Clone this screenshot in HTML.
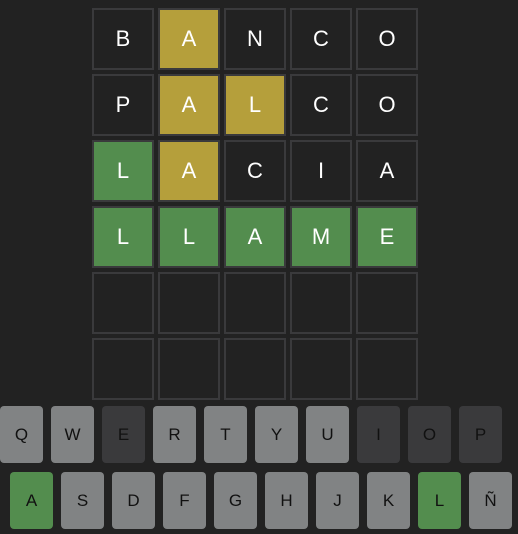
<!DOCTYPE html><html><head><style>
body{margin:0;width:518px;height:534px;background:#222222;font-family:"Liberation Sans",sans-serif;position:relative;overflow:hidden}
.t{position:absolute;width:58px;height:58px;border:2px solid #3a3a3c;color:#fff;font-size:22px;display:flex;align-items:center;justify-content:center}
.y{background:#b59f3b}.g{background:#538d4e}
.k{position:absolute;width:43px;height:57px;border-radius:4px;background:#818384;color:#111;font-size:17px;display:flex;align-items:center;justify-content:center}
.d{background:#3a3a3c}.kg{background:#538d4e}
</style></head><body>
<div id="b"></div>
<script>
var rows=[["B","A","N","C","O"],["P","A","L","C","O"],["L","A","C","I","A"],["L","L","A","M","E"],["","","","",""],["","","","",""]];
var cls=[["","y","","",""],["","y","y","",""],["g","y","","",""],["g","g","g","g","g"],["","","","",""],["","","","",""]];
var h="";
for(var r=0;r<6;r++)for(var c=0;c<5;c++)h+='<div class="t '+cls[r][c]+'" style="left:'+(92+c*66)+'px;top:'+(8+r*66)+'px">'+rows[r][c]+'</div>';
var k1="QWERTYUIOP",d1="EIOP";
for(var i=0;i<10;i++)h+='<div class="k '+(d1.indexOf(k1[i])>=0?"d":"")+'" style="left:'+(i*51)+'px;top:406px">'+k1[i]+'</div>';
var k2="ASDFGHJKLÑ";
for(var i=0;i<10;i++)h+='<div class="k '+("AL".indexOf(k2[i])>=0?"kg":"")+'" style="left:'+(10+i*51)+'px;top:472px">'+k2[i]+'</div>';
document.getElementById("b").innerHTML=h;
</script>
</body></html>
